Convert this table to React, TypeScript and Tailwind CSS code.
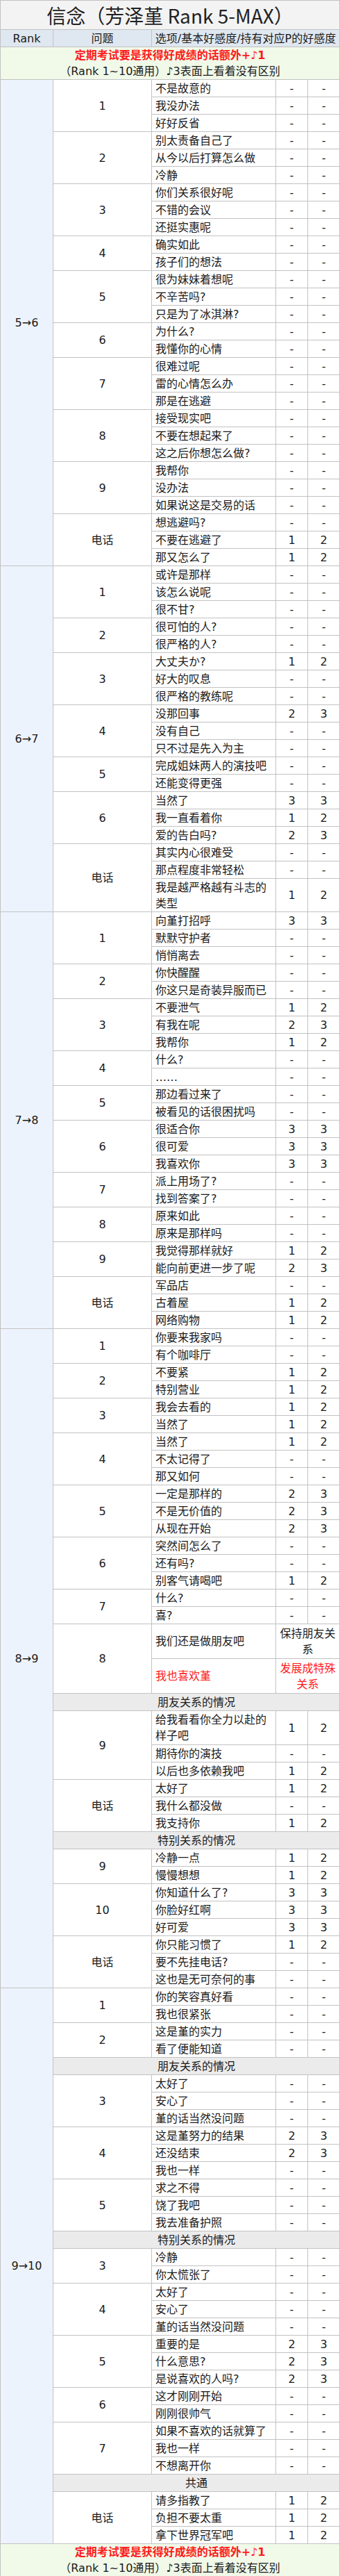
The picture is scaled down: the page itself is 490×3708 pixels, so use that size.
import React from "react";

type Opt = { t: string; a?: string; b?: string; h?: number; red?: boolean; span?: string };
type Item = { q: string; o: Opt[] } | { sub: string };
type Group = { rank: string; items: Item[] };

const d = (t: string, a = "-", b = "-", h?: number): Opt => ({ t, a, b, h });

const groups: Group[] = [
  {
    rank: "5→6",
    items: [
      { q: "1", o: [d("不是故意的"), d("我没办法"), d("好好反省")] },
      { q: "2", o: [d("别太责备自己了"), d("从今以后打算怎么做"), d("冷静")] },
      { q: "3", o: [d("你们关系很好呢"), d("不错的会议"), d("还挺实惠呢")] },
      { q: "4", o: [d("确实如此"), d("孩子们的想法")] },
      { q: "5", o: [d("很为妹妹着想呢"), d("不辛苦吗?"), d("只是为了冰淇淋?")] },
      { q: "6", o: [d("为什么?"), d("我懂你的心情")] },
      { q: "7", o: [d("很难过呢"), d("雷的心情怎么办"), d("那是在逃避")] },
      { q: "8", o: [d("接受现实吧"), d("不要在想起来了"), d("这之后你想怎么做?")] },
      { q: "9", o: [d("我帮你"), d("没办法"), d("如果说这是交易的话")] },
      { q: "电话", o: [d("想逃避吗?"), d("不要在逃避了", "1", "2"), d("那又怎么了", "1", "2")] },
    ],
  },
  {
    rank: "6→7",
    items: [
      { q: "1", o: [d("或许是那样"), d("该怎么说呢"), d("很不甘?")] },
      { q: "2", o: [d("很可怕的人?"), d("很严格的人?")] },
      { q: "3", o: [d("大丈夫か?", "1", "2"), d("好大的叹息"), d("很严格的教练呢")] },
      { q: "4", o: [d("没那回事", "2", "3"), d("没有自己"), d("只不过是先入为主")] },
      { q: "5", o: [d("完成姐妹两人的演技吧"), d("还能变得更强")] },
      { q: "6", o: [d("当然了", "3", "3"), d("我一直看着你", "1", "2"), d("爱的告白吗?", "2", "3")] },
      {
        q: "电话",
        o: [d("其实内心很难受"), d("那点程度非常轻松"), d("我是越严格越有斗志的类型", "1", "2", 48)],
      },
    ],
  },
  {
    rank: "7→8",
    items: [
      { q: "1", o: [d("向堇打招呼", "3", "3"), d("默默守护者"), d("悄悄离去")] },
      { q: "2", o: [d("你快醒醒"), d("你这只是奇装异服而已")] },
      { q: "3", o: [d("不要泄气", "1", "2"), d("有我在呢", "2", "3"), d("我帮你", "1", "2")] },
      { q: "4", o: [d("什么?"), d("……")] },
      { q: "5", o: [d("那边看过来了"), d("被看见的话很困扰吗")] },
      { q: "6", o: [d("很适合你", "3", "3"), d("很可爱", "3", "3"), d("我喜欢你", "3", "3")] },
      { q: "7", o: [d("派上用场了?"), d("找到答案了?")] },
      { q: "8", o: [d("原来如此"), d("原来是那样吗")] },
      { q: "9", o: [d("我觉得那样就好", "1", "2"), d("能向前更进一步了呢", "2", "3")] },
      { q: "电话", o: [d("军品店"), d("古着屋", "1", "2"), d("网络购物", "1", "2")] },
    ],
  },
  {
    rank: "8→9",
    items: [
      { q: "1", o: [d("你要来我家吗"), d("有个咖啡厅")] },
      { q: "2", o: [d("不要紧", "1", "2"), d("特别营业", "1", "2")] },
      { q: "3", o: [d("我会去看的", "1", "2"), d("当然了", "1", "2")] },
      { q: "4", o: [d("当然了", "1", "2"), d("不太记得了"), d("那又如何")] },
      { q: "5", o: [d("一定是那样的", "2", "3"), d("不是无价值的", "2", "3"), d("从现在开始", "2", "3")] },
      { q: "6", o: [d("突然间怎么了"), d("还有吗?"), d("别客气请喝吧", "1", "2")] },
      { q: "7", o: [d("什么?"), d("喜?")] },
      {
        q: "8",
        o: [
          { t: "我们还是做朋友吧", span: "保持朋友关系", h: 50 },
          { t: "我也喜欢堇", span: "发展成特殊关系", h: 50, red: true },
        ],
      },
      { sub: "朋友关系的情况" },
      {
        q: "9",
        o: [d("给我看看你全力以赴的样子吧", "1", "2", 49), d("期待你的演技"), d("以后也多依赖我吧", "1", "2")],
      },
      { q: "电话", o: [d("太好了", "1", "2"), d("我什么都没做"), d("我支持你", "1", "2")] },
      { sub: "特别关系的情况" },
      { q: "9", o: [d("冷静一点", "1", "2"), d("慢慢想想", "1", "2")] },
      { q: "10", o: [d("你知道什么了?", "3", "3"), d("你脸好红啊", "3", "3"), d("好可爱", "3", "3")] },
      { q: "电话", o: [d("你只能习惯了", "1", "2"), d("要不先挂电话?"), d("这也是无可奈何的事")] },
    ],
  },
  {
    rank: "9→10",
    items: [
      { q: "1", o: [d("你的笑容真好看"), d("我也很紧张")] },
      { q: "2", o: [d("这是堇的实力"), d("看了便能知道")] },
      { sub: "朋友关系的情况" },
      { q: "3", o: [d("太好了"), d("安心了"), d("堇的话当然没问题")] },
      { q: "4", o: [d("这是堇努力的结果", "2", "3"), d("还没结束", "2", "3"), d("我也一样")] },
      { q: "5", o: [d("求之不得"), d("饶了我吧"), d("我去准备护照")] },
      { sub: "特别关系的情况" },
      { q: "3", o: [d("冷静"), d("你太慌张了")] },
      { q: "4", o: [d("太好了"), d("安心了"), d("堇的话当然没问题")] },
      { q: "5", o: [d("重要的是", "2", "3"), d("什么意思?", "2", "3"), d("是说喜欢的人吗?", "2", "3")] },
      { q: "6", o: [d("这才刚刚开始"), d("刚刚很帅气")] },
      { q: "7", o: [d("如果不喜欢的话就算了"), d("我也一样"), d("不想离开你")] },
      { sub: "共通" },
      { q: "电话", o: [d("请多指教了", "1", "2"), d("负担不要太重", "1", "2"), d("拿下世界冠军吧", "1", "2")] },
    ],
  },
];

const cell = "border border-[#c2c2c2] p-0";

function Note() {
  return (
    <td colSpan={5} className={`${cell} bg-[#f1f9e8] text-center leading-[23px]`}>
      <div className="font-bold text-[#ff1a1a]">定期考试要是获得好成绩的话额外+♪1</div>
      <div>（Rank 1~10通用）♪3表面上看着没有区别</div>
    </td>
  );
}

function GroupRows({ g }: { g: Group }) {
  const total = g.items.reduce((n, it) => n + ("sub" in it ? 1 : it.o.length), 0);
  const rows: React.ReactNode[] = [];
  let first = true;
  g.items.forEach((it, i) => {
    const rankCell = first ? (
      <td rowSpan={total} className={`${cell} bg-[#edf3fc] text-center align-middle`}>
        {g.rank}
      </td>
    ) : null;
    first = false;
    if ("sub" in it) {
      rows.push(
        <tr key={i} className="h-[25px]">
          {rankCell}
          <td colSpan={4} className={`${cell} bg-[#ebebeb] text-center`}>
            {it.sub}
          </td>
        </tr>
      );
      return;
    }
    it.o.forEach((o, j) => {
      rows.push(
        <tr key={`${i}-${j}`} style={{ height: o.h ?? 25 }}>
          {j === 0 ? rankCell : null}
          {j === 0 && (
            <td rowSpan={it.o.length} className={`${cell} bg-white text-center`}>
              {it.q}
            </td>
          )}
          <td className={`${cell} bg-white pl-[5px] text-left ${o.red ? "text-[#ff1a1a]" : ""}`}>{o.t}</td>
          {o.span ? (
            <td colSpan={2} className={`${cell} bg-white text-center ${o.red ? "text-[#ff1a1a]" : ""}`}>
              {o.span}
            </td>
          ) : (
            <>
              <td className={`${cell} bg-white text-center`}>{o.a}</td>
              <td className={`${cell} bg-white text-center`}>{o.b}</td>
            </>
          )}
        </tr>
      );
    });
  });
  return <>{rows}</>;
}

export default function App() {
  return (
    <div className="w-[490px] bg-white font-['DejaVu_Sans','Noto_Sans_CJK_SC',sans-serif] text-[16px] leading-[23px] text-[#1a1a1a]">
      <table className="w-[489px] table-fixed border-collapse">
        <colgroup>
          <col className="w-[76px]" />
          <col className="w-[142px]" />
          <col className="w-[179px]" />
          <col className="w-[46px]" />
          <col className="w-[46px]" />
        </colgroup>
        <tbody>
          <tr className="h-[42px]">
            <td
              colSpan={5}
              className={`${cell} bg-[#f3f3f3] text-center font-['Noto_Sans_CJK_SC',sans-serif] text-[28px] leading-[40px] text-[#222]`}
            >
              信念（芳泽堇 Rank 5-MAX）
            </td>
          </tr>
          <tr className="h-[25px] bg-[#dfe7f0]">
            <td className={`${cell} text-center`}>Rank</td>
            <td className={`${cell} text-center`}>问题</td>
            <td colSpan={3} className={`${cell} text-center whitespace-nowrap`}>
              选项/基本好感度/持有对应P的好感度
            </td>
          </tr>
          <tr className="h-[46px]">
            <Note />
          </tr>
          {groups.map((g) => (
            <GroupRows key={g.rank} g={g} />
          ))}
          <tr className="h-[47px]">
            <Note />
          </tr>
        </tbody>
      </table>
    </div>
  );
}
